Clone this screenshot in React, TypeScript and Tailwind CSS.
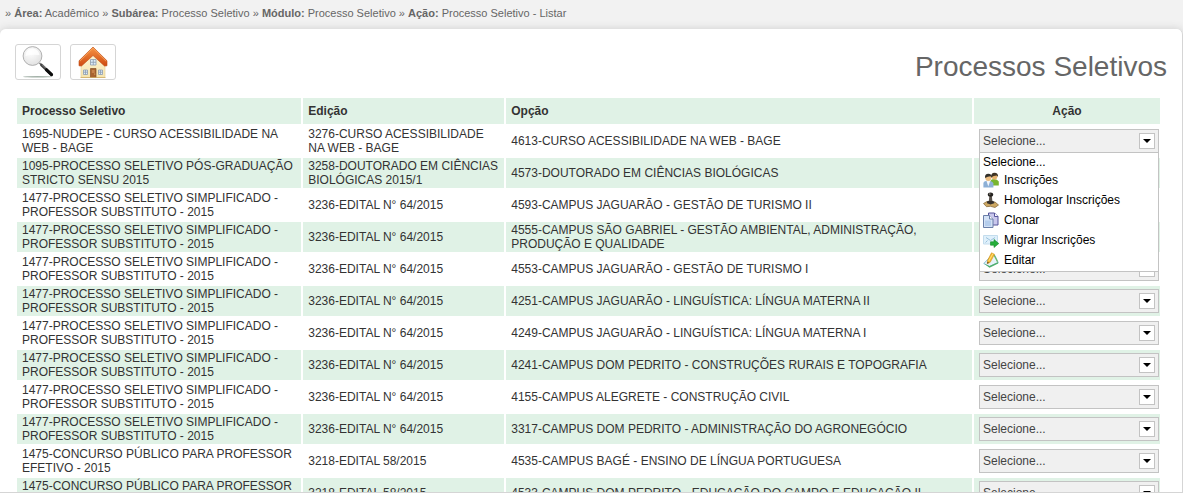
import { useState } from "react";

const path = [
  { label: "Área:", value: "Acadêmico" },
  { label: "Subárea:", value: "Processo Seletivo" },
  { label: "Módulo:", value: "Processo Seletivo" },
  { label: "Ação:", value: "Processo Seletivo - Listar" },
];

const simplificado = "1477-PROCESSO SELETIVO SIMPLIFICADO - PROFESSOR SUBSTITUTO - 2015";
const concurso = "1475-CONCURSO PÚBLICO PARA PROFESSOR EFETIVO - 2015";

const rows = [
  ["1695-NUDEPE - CURSO ACESSIBILIDADE NA WEB - BAGE", "3276-CURSO ACESSIBILIDADE NA WEB - BAGE", "4613-CURSO ACESSIBILIDADE NA WEB - BAGE"],
  ["1095-PROCESSO SELETIVO PÓS-GRADUAÇÃO STRICTO SENSU 2015", "3258-DOUTORADO EM CIÊNCIAS BIOLÓGICAS 2015/1", "4573-DOUTORADO EM CIÊNCIAS BIOLÓGICAS"],
  [simplificado, "3236-EDITAL N° 64/2015", "4593-CAMPUS JAGUARÃO - GESTÃO DE TURISMO II"],
  [simplificado, "3236-EDITAL N° 64/2015", "4555-CAMPUS SÃO GABRIEL - GESTÃO AMBIENTAL, ADMINISTRAÇÃO, PRODUÇÃO E QUALIDADE"],
  [simplificado, "3236-EDITAL N° 64/2015", "4553-CAMPUS JAGUARÃO - GESTÃO DE TURISMO I"],
  [simplificado, "3236-EDITAL N° 64/2015", "4251-CAMPUS JAGUARÃO - LINGUÍSTICA: LÍNGUA MATERNA II"],
  [simplificado, "3236-EDITAL N° 64/2015", "4249-CAMPUS JAGUARÃO - LINGUÍSTICA: LÍNGUA MATERNA I"],
  [simplificado, "3236-EDITAL N° 64/2015", "4241-CAMPUS DOM PEDRITO - CONSTRUÇÕES RURAIS E TOPOGRAFIA"],
  [simplificado, "3236-EDITAL N° 64/2015", "4155-CAMPUS ALEGRETE - CONSTRUÇÃO CIVIL"],
  [simplificado, "3236-EDITAL N° 64/2015", "3317-CAMPUS DOM PEDRITO - ADMINISTRAÇÃO DO AGRONEGÓCIO"],
  [concurso, "3218-EDITAL 58/2015", "4535-CAMPUS BAGÉ - ENSINO DE LÍNGUA PORTUGUESA"],
  [concurso, "3218-EDITAL 58/2015", "4533-CAMPUS DOM PEDRITO - EDUCAÇÃO DO CAMPO E EDUCAÇÃO II"],
];

const SearchIcon = () => (
  <svg width="32" height="32" viewBox="0 0 32 32" aria-hidden="true">
    <defs>
      <radialGradient id="lens" cx="0.4" cy="0.3" r="0.8">
        <stop offset="0" stopColor="#ffffff" />
        <stop offset="1" stopColor="#dedede" />
      </radialGradient>
    </defs>
    <ellipse cx="15.500" cy="30.700" rx="14.500" ry="0.800" fill="#7d9284" opacity="0.7" />
    <path d="M17.500 17l3 2.800" stroke="#777" strokeWidth="1.600" />
    <path d="M19.500 19l10 9.600" stroke="#444" strokeWidth="2.800" strokeLinecap="round" />
    <path d="M20 18.600l9.500 8.800" stroke="#aaa" strokeWidth="0.700" />
    <path d="M24.500 23.800l5 4.800" stroke="#0c0c0c" strokeWidth="3.200" strokeLinecap="round" />
    <circle cx="10.500" cy="10" r="9.400" fill="url(#lens)" stroke="#a8a8a8" strokeWidth="0.900" />
    <path d="M3.500 10a7 7 0 0 1 14 -1q-7 -1 -14 1z" fill="#fff" opacity="0.8" />
  </svg>
);

const HomeIcon = () => (
  <svg width="32" height="32" viewBox="0 0 32 32" aria-hidden="true">
    <defs>
      <linearGradient id="wall" x1="0" y1="0" x2="0" y2="1">
        <stop offset="0" stopColor="#fdf6d8" />
        <stop offset="1" stopColor="#f6e4ae" />
      </linearGradient>
      <linearGradient id="roof" x1="0" y1="0" x2="0" y2="1">
        <stop offset="0" stopColor="#f79443" />
        <stop offset="1" stopColor="#cf4a12" />
      </linearGradient>
    </defs>
    <path d="M4 17L16 6l12 11v14.500H4z" fill="url(#wall)" stroke="#e3cd92" strokeWidth="0.600" />
    <path d="M16 1L2 14.800v5L4.500 20 16 9.500 27.500 20l2.500-0.200v-5z" fill="url(#roof)" stroke="#bd4c12" strokeWidth="0.600" />
    <path d="M2.800 15.300L16 2.200 29.200 15.300" fill="none" stroke="#ffb066" strokeWidth="0.700" />
    <g fill="#dcecf8" stroke="#8d9cae" strokeWidth="0.800">
      <path d="M13.500 13.500h5.500v5.500h-5.500zM16.250 13.500v5.500M13.500 16.250h5.500" />
      <path d="M6.500 24h4v4.500h-4zM8.500 24v4.500M6.500 26.200h4" />
      <path d="M21.500 24h4v4.500h-4zM23.500 24v4.500M21.500 26.200h4" />
    </g>
    <path d="M13.500 22.500h5.500v9h-5.500z" fill="#a9632f" stroke="#865026" strokeWidth="0.700" />
    <path d="M14.800 24h2.900v3h-2.900z" fill="#c7834b" />
    <circle cx="17.800" cy="28" r="0.500" fill="#f6d88b" />
    <path d="M3.500 31.500h25" stroke="#d0ad66" strokeWidth="0.800" />
  </svg>
);

const PeopleIcon = () => (
  <svg width="16" height="16" viewBox="0 0 16 16" aria-hidden="true">
    <path d="M7.500 13.500V9.500q0-2.500 3.500-2.500t4.800 2.500v4z" fill="#79b52f" />
    <circle cx="11.500" cy="4.800" r="2.800" fill="#e5b26f" />
    <path d="M8 5.500Q7.800 0.800 11.500 0.800t3.600 4.200l-1.400-1.600q-3 0-5.700 2.100z" fill="#3d3224" />
    <path d="M0.400 15.500v-4q0-2.800 4.500-2.800t5.500 2.800v4z" fill="#8db0d6" />
    <path d="M3.500 9l1.800 5.500L7.200 9z" fill="#f4f7fb" />
    <circle cx="5.300" cy="6" r="3" fill="#edbd80" />
    <path d="M2 6Q1.700 1.800 5.300 1.800t3.500 4.200L7.500 4.300Q4.800 4.500 2 6z" fill="#33302b" />
  </svg>
);

const StampIcon = () => (
  <svg width="16" height="16" viewBox="0 0 16 16" aria-hidden="true">
    <path d="M0.500 11.500L4 9.500l4 1 4-0.500 3.500 3-3.500 2.500-4.500-1.200-4 0.400z" fill="#cda863" stroke="#806130" strokeWidth="0.700" />
    <path d="M4 9.500l3.500-1.300 3.700 1.300v1.700l-3.700 1.400L4 11.200z" fill="#37332f" />
    <path d="M6.400 4h2.400l0.600 5H5.800z" fill="#57514a" />
    <ellipse cx="7.500" cy="2.600" rx="2.700" ry="2.200" fill="#24221f" />
    <circle cx="6.800" cy="2.100" r="0.800" fill="#8a857d" />
  </svg>
);

const CopyIcon = () => (
  <svg width="16" height="16" viewBox="0 0 16 16" aria-hidden="true">
    <path d="M5.500 1h6l3.500 3.500V13H5.500z" fill="#c9c7ec" stroke="#56549a" />
    <path d="M11.500 1v3.500H15" fill="#fff" stroke="#56549a" />
    <path d="M0.500 3.500h6L10 7v8.500H0.500z" fill="#d3e1f5" stroke="#6a7fa8" />
    <path d="M6.500 3.500V7H10" fill="#fff" stroke="#6a7fa8" />
    <path d="M2 8.500h6v5.500H2z" fill="#b5cdec" />
  </svg>
);

const MailIcon = () => (
  <svg width="16" height="16" viewBox="0 0 16 16" aria-hidden="true">
    <path d="M0.500 3.500h14v8.500h-14z" fill="#dff0fb" stroke="#c3dced" />
    <path d="M3 5.500l4.500 3 4.500-3M2.500 10.500l2-2" fill="none" stroke="#8ab6d4" strokeWidth="0.800" />
    <path d="M7.500 9.800h3.500V7.500l4.800 4-4.800 4v-2.300H7.500z" fill="#25ae3a" stroke="#148b28" strokeWidth="0.600" />
  </svg>
);

const EditIcon = () => (
  <svg width="16" height="16" viewBox="0 0 16 16" aria-hidden="true">
    <path d="M0.800 11.500L9 3l3 0.500 3.200 7L6.500 14.500z" fill="#e6f3fa" stroke="#7bb9d2" strokeWidth="0.900" />
    <path d="M0.800 11.500l5.700 2.500 8.700-4v1.500L6.500 15.700z" fill="#4fae6a" />
    <path d="M11 3l3.500 6.800" stroke="#6cb85f" strokeWidth="1.200" />
    <path d="M4.500 8.500L8.500 0.800l3 1.500-4.300 8-2.900 1.400z" fill="#f5b92e" stroke="#c98f1e" strokeWidth="0.600" />
    <path d="M5.800 9l4.200-7.500" stroke="#ffe58a" strokeWidth="0.900" />
    <path d="M4.400 9.800l-0.100 1.900 1.700-0.900z" fill="#4b3b25" />
  </svg>
);

const actions = [
  { label: "Inscrições", icon: <PeopleIcon /> },
  { label: "Homologar Inscrições", icon: <StampIcon /> },
  { label: "Clonar", icon: <CopyIcon /> },
  { label: "Migrar Inscrições", icon: <MailIcon /> },
  { label: "Editar", icon: <EditIcon /> },
];

function ActionSelect({ name, open, onToggle }: { name: string; open: boolean; onToggle: () => void }) {
  const [value, setValue] = useState("");

  const choose = (v: string) => {
    setValue(v);
    onToggle();
  };

  return (
    <div className="relative">
      <select
        aria-label={name}
        value={value}
        onChange={(e) => setValue(e.target.value)}
        onMouseDown={(e) => {
          e.preventDefault();
          onToggle();
        }}
        className="block h-6 w-full appearance-none border border-[#c3c3c3] bg-[#f0f0f0] pl-[3px] pr-6 text-xs text-[#444] outline-none"
      >
        <option value="">Selecione...</option>
        {actions.map((a) => (
          <option key={a.label}>{a.label}</option>
        ))}
      </select>
      <span className="pointer-events-none absolute right-1 top-1 flex size-4 items-center justify-center border border-[#c3c3c3] bg-white">
        <svg width="8" height="4" viewBox="0 0 8 4" aria-hidden="true">
          <path d="M0 0h8L4 4z" fill="#000" />
        </svg>
      </span>
      {open && (
        <ul className="absolute inset-x-0 top-full z-10 -mt-px border border-[#c3c3c3] bg-white pb-px text-black">
          <li>
            <button type="button" onClick={() => choose("")} className="flex h-[17px] w-full items-center px-[3px]">
              Selecione...
            </button>
          </li>
          {actions.map((a) => (
            <li key={a.label}>
              <button
                type="button"
                onClick={() => choose(a.label)}
                className="flex h-5 w-full items-center gap-[5px] px-[3px] hover:bg-gray-100"
              >
                {a.icon}
                {a.label}
              </button>
            </li>
          ))}
        </ul>
      )}
    </div>
  );
}

export default function App() {
  const [openRow, setOpenRow] = useState(0);

  return (
    <div className="flex h-screen flex-col bg-[#f2f2f2] font-['Liberation_Sans',Arial,sans-serif] text-xs text-[#333]">
      <nav className="shrink-0 px-[5px] pb-2 pt-[5px] text-[11px] leading-4 text-[#666]">
        <p>
          {path.map((p, i) => (
            <span key={i}>
              » <b>{p.label}</b> {p.value}{" "}
            </span>
          ))}
        </p>
      </nav>

      <main className="min-h-0 flex-1 overflow-y-auto rounded-t-md border-b border-r border-[#d5d5d5] bg-white px-[15px] pt-[15px] shadow-[0_0_8px_#ccc] [scrollbar-width:none]">
        <div className="flex justify-between">
          <div className="flex gap-[9px]">
            <button type="button" aria-label="Pesquisar" className="flex h-9 w-[46px] items-center justify-center rounded-[3px] border border-[#d5d5d5] bg-white">
              <SearchIcon />
            </button>
            <button type="button" aria-label="Início" className="flex h-9 w-[46px] items-center justify-center rounded-[3px] border border-[#d5d5d5] bg-white">
              <HomeIcon />
            </button>
          </div>
          <h1 className="pt-1 text-[28px] leading-[38px] text-[#666]">Processos Seletivos</h1>
        </div>

        <div className="mt-[10px] pr-[5px]">
          <table className="w-full table-fixed border-separate border-spacing-0.5 leading-[14px]">
            <colgroup>
              <col className="w-[25%]" />
              <col className="w-[201px]" />
              <col />
              <col className="w-[186px]" />
            </colgroup>
            <thead>
              <tr className="h-[26px] bg-[#e0f2e6] text-left">
                <th className="px-[5px]">Processo Seletivo</th>
                <th className="px-[5px]">Edição</th>
                <th className="px-[5px]">Opção</th>
                <th className="px-[5px] text-center">Ação</th>
              </tr>
            </thead>
            <tbody>
              {rows.map((row, i) => (
                <tr key={i} className="h-[30px] even:bg-[#e0f2e6]">
                  <td className="px-[5px] py-px">{row[0]}</td>
                  <td className="px-[5px] py-px">{row[1]}</td>
                  <td className="px-[5px] py-px">{row[2]}</td>
                  <td className="py-px pl-[5px] pr-px">
                    <ActionSelect
                      name={`Ação ${row[2]}`}
                      open={openRow === i}
                      onToggle={() => setOpenRow(openRow === i ? -1 : i)}
                    />
                  </td>
                </tr>
              ))}
            </tbody>
          </table>
        </div>
      </main>
    </div>
  );
}
